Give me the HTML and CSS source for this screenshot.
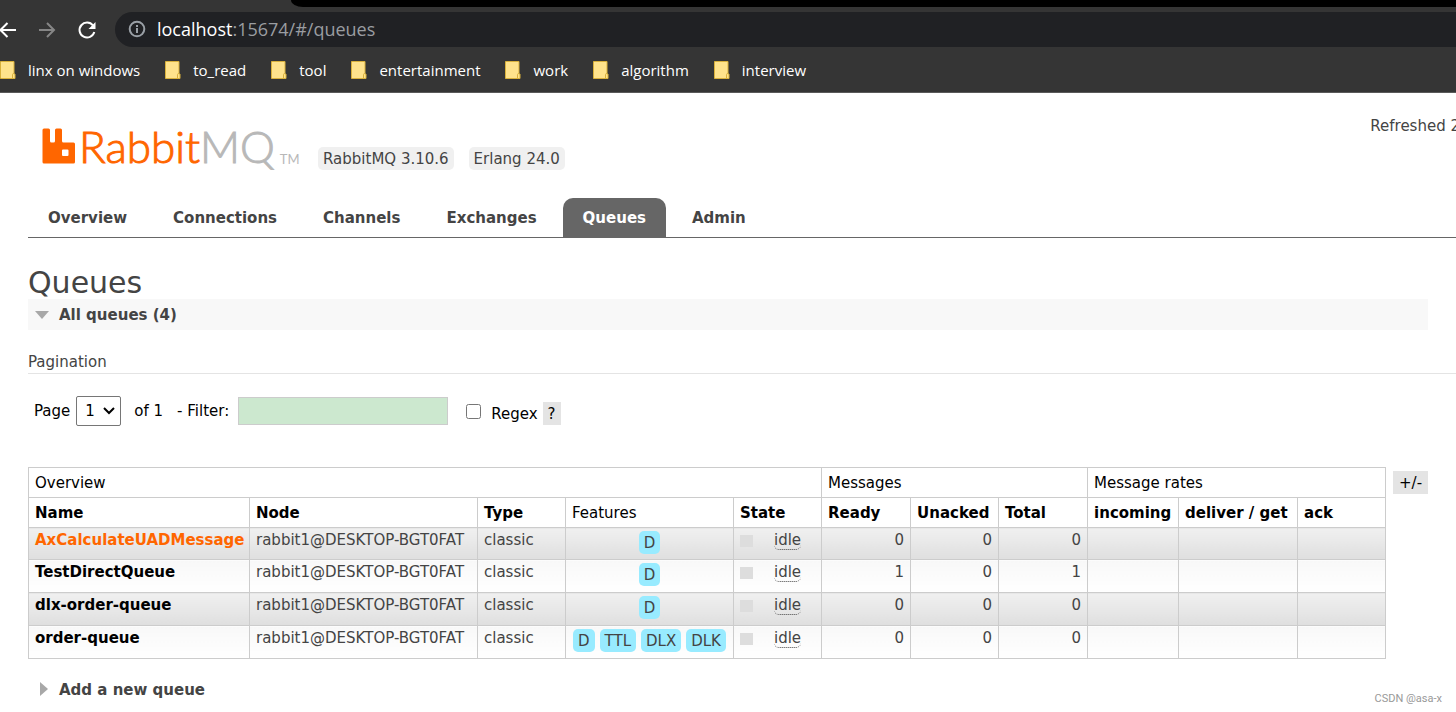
FILE: index.html
```html
<!DOCTYPE html>
<html lang="en">
<head>
<meta charset="utf-8">
<title>RabbitMQ Management</title>
<link rel="stylesheet" href="styles.css">
</head>
<body>
<header class="browser">
  <div class="tabstrip"></div>
  <div class="toolbar">
    <button class="nav" aria-label="Back"><svg width="20" height="20" viewBox="0 0 20 20"><path d="M19 10H3M10.500 3L3.500 10l7 7" /></svg></button>
    <button class="nav nav-off" aria-label="Forward"><svg width="20" height="20" viewBox="0 0 20 20"><path d="M2 10h15M10 3l7 7-7 7" /></svg></button>
    <button class="nav" aria-label="Reload"><svg width="20" height="20" viewBox="0 0 20 20"><path d="M16 5.500A7.500 7.500 0 1 0 17.300 12" /><path class="solid" d="M18.500 2v7h-7z" /></svg></button>
    <div class="address">
      <svg class="info" width="18" height="18" viewBox="0 0 18 18"><circle cx="9" cy="9" r="7.300" /><path d="M9 8v5M9 5v2" /></svg>
      <span><span class="host">localhost</span>:15674/#/queues</span>
    </div>
  </div>
  <nav class="bookmarks" aria-label="Bookmarks">
    <a href="#"><svg class="folder" width="16" height="20" viewBox="0 0 16 20"><path d="M.5 1.500h13.500V14h1v4.500H.5z" /><path d="M12.500 18v-3.500q0-1 1.500-1" /></svg>linx on windows</a>
    <a href="#"><svg class="folder" width="16" height="20" viewBox="0 0 16 20"><path d="M.5 1.500h13.500V14h1v4.500H.5z" /><path d="M12.500 18v-3.500q0-1 1.500-1" /></svg>to_read</a>
    <a href="#"><svg class="folder" width="16" height="20" viewBox="0 0 16 20"><path d="M.5 1.500h13.500V14h1v4.500H.5z" /><path d="M12.500 18v-3.500q0-1 1.500-1" /></svg>tool</a>
    <a href="#"><svg class="folder" width="16" height="20" viewBox="0 0 16 20"><path d="M.5 1.500h13.500V14h1v4.500H.5z" /><path d="M12.500 18v-3.500q0-1 1.500-1" /></svg>entertainment</a>
    <a href="#"><svg class="folder" width="16" height="20" viewBox="0 0 16 20"><path d="M.5 1.500h13.500V14h1v4.500H.5z" /><path d="M12.500 18v-3.500q0-1 1.500-1" /></svg>work</a>
    <a href="#"><svg class="folder" width="16" height="20" viewBox="0 0 16 20"><path d="M.5 1.500h13.500V14h1v4.500H.5z" /><path d="M12.500 18v-3.500q0-1 1.500-1" /></svg>algorithm</a>
    <a href="#"><svg class="folder" width="16" height="20" viewBox="0 0 16 20"><path d="M.5 1.500h13.500V14h1v4.500H.5z" /><path d="M12.500 18v-3.500q0-1 1.500-1" /></svg>interview</a>
  </nav>
</header>

<div class="masthead">
  <a class="logo" href="#" aria-label="RabbitMQ">
    <svg width="34" height="36" viewBox="0 0 34 36"><path d="M2 .5h4.500q1.500 0 1.500 1.500v11q0 1.500 1.500 1.500h2q1.500 0 1.500-1.500V2q0-1.500 1.500-1.500h4q1.500 0 1.500 1.500v11q0 1.500 1.500 1.500h10q1.500 0 1.500 1.500V34q0 1.500-1.500 1.500H2Q.5 35.500.5 34V2Q.5.500 2 .500zM21 21.500q-1 0-1 1v4.500q0 1 1 1h4.500q1 0 1-1v-4.500q0-1-1-1z" /></svg>
    <span class="word">Rabbit<span class="mq">MQ</span></span><span class="tm">TM</span>
  </a>
  <ul class="versions"><li>RabbitMQ 3.10.6</li><li>Erlang 24.0</li></ul>
  <div class="refreshed">Refreshed 2</div>
</div>

<nav class="tabs" aria-label="Sections">
  <a href="#">Overview</a><a href="#">Connections</a><a href="#">Channels</a><a href="#">Exchanges</a><a class="selected" href="#">Queues</a><a href="#">Admin</a>
</nav>

<main class="main">
  <h1>Queues</h1>
  <h2 class="section open"><svg width="16" height="16" viewBox="0 0 16 16"><path d="M1 4h14l-7 8z" /></svg>All queues (4)</h2>
  <h3>Pagination</h3>
  <form class="filters">
    <label for="page">Page</label>
    <span class="select"><select id="page"><option>1</option></select><svg width="12" height="8" viewBox="0 0 12 8"><path d="M1 1l5 5 5-5" /></svg></span>
    <span class="of">of 1</span>
    <label class="filter-label" for="filter">- Filter:</label>
    <input class="filter" id="filter" type="text">
    <input class="check" id="regex" type="checkbox">
    <label class="regex" for="regex">Regex</label>
    <button class="help" type="button">?</button>
  </form>

  <div class="listing">
    <table>
      <colgroup><col class="c-name"><col class="c-node"><col class="c-std"><col class="c-features"><col class="c-std"><col class="c-num"><col class="c-std"><col class="c-num"><col class="c-in"><col class="c-deliver"><col class="c-std"></colgroup>
      <thead>
        <tr><th class="plain" colspan="5">Overview</th><th class="plain" colspan="3">Messages</th><th class="plain" colspan="3">Message rates</th></tr>
        <tr><th>Name</th><th>Node</th><th>Type</th><th class="plain">Features</th><th>State</th><th>Ready</th><th>Unacked</th><th>Total</th><th>incoming</th><th>deliver / get</th><th>ack</th></tr>
      </thead>
      <tbody>
        <tr><td><a class="hover" href="#">AxCalculateUADMessage</a></td><td>rabbit1@DESKTOP-BGT0FAT</td><td>classic</td><td class="features"><span class="tags"><b>D</b></span></td><td><span class="state"><i></i><abbr>idle</abbr></span></td><td class="r">0</td><td class="r">0</td><td class="r">0</td><td></td><td></td><td></td></tr>
        <tr><td><a href="#">TestDirectQueue</a></td><td>rabbit1@DESKTOP-BGT0FAT</td><td>classic</td><td class="features"><span class="tags"><b>D</b></span></td><td><span class="state"><i></i><abbr>idle</abbr></span></td><td class="r">1</td><td class="r">0</td><td class="r">1</td><td></td><td></td><td></td></tr>
        <tr><td><a href="#">dlx-order-queue</a></td><td>rabbit1@DESKTOP-BGT0FAT</td><td>classic</td><td class="features"><span class="tags"><b>D</b></span></td><td><span class="state"><i></i><abbr>idle</abbr></span></td><td class="r">0</td><td class="r">0</td><td class="r">0</td><td></td><td></td><td></td></tr>
        <tr><td><a href="#">order-queue</a></td><td>rabbit1@DESKTOP-BGT0FAT</td><td>classic</td><td class="features"><span class="tags"><b>D</b><b>TTL</b><b>DLX</b><b>DLK</b></span></td><td><span class="state"><i></i><abbr>idle</abbr></span></td><td class="r">0</td><td class="r">0</td><td class="r">0</td><td></td><td></td><td></td></tr>
      </tbody>
    </table>
    <button class="help columns" type="button">+/-</button>
  </div>

  <h2 class="section"><svg width="16" height="16" viewBox="0 0 16 16"><path d="M6 0v14l8-7z" /></svg>Add a new queue</h2>
</main>
<div class="watermark">CSDN @asa-x</div>
</body>
</html>
```

FILE: styles.css
```css
* { box-sizing: border-box; }
body {
  margin: 0;
  background: #fff;
  color: #444;
  font: 15px/18px Verdana, "DejaVu Sans", sans-serif;
  overflow: hidden;
}
a { color: inherit; text-decoration: none; }
button { border: 0; padding: 0; background: none; font: inherit; color: inherit; }

.browser {
  background: #353535;
  border-bottom: 1px solid #5a5a5a;
  color: #fff;
  font-family: "Segoe UI", "Open Sans", sans-serif;
}
.tabstrip { height: 7px; margin-left: 291px; background: #000; border-bottom-left-radius: 12px 7px; }
.toolbar { display: flex; align-items: center; padding-top: 5px; }
.nav { display: flex; width: 20px; margin-right: 20px; }
.nav:first-child { margin-left: -3px; }
.nav svg { fill: none; stroke: #fff; stroke-width: 2; }
.nav .solid { fill: #fff; stroke: none; }
.nav-off svg { stroke: #868686; }
.address {
  flex: 1;
  display: flex;
  align-items: center;
  gap: 11px;
  height: 35px;
  margin-left: -2px;
  padding: 0 0 1px 13px;
  border-radius: 18px 0 0 18px;
  background: #202124;
  color: #9a9da1;
  font-size: 18px;
}
.host { color: #fff; }
.info { fill: none; stroke: #9aa0a6; stroke-width: 2; }
.bookmarks { display: flex; gap: 25px; height: 45px; align-items: center; font-size: 15px; }
.bookmarks a { display: flex; align-items: center; gap: 12px; white-space: nowrap; }
.folder { fill: #ffe38c; stroke: #d9b13c; }

.masthead { display: flex; align-items: flex-start; height: 105px; padding: 24px 0 0 42px; }
.logo { display: flex; align-items: flex-start; width: 276px; padding-top: 11px; color: #f60; }
.logo svg { flex: none; fill: #f60; }
.word { margin: -1px 0 0 3px; font: 300 44px/38px Lato, sans-serif; -webkit-text-stroke: 1px currentColor; }
.mq { color: #b8b8b8; }
.tm { margin: 22px 0 0 5px; color: #b8b8b8; font: 13px/18px Lato, sans-serif; }
.versions { display: flex; gap: 15px; margin: 30px 0 0; padding: 0; list-style: none; }
.versions li { padding: 3px 5px 2px; border-radius: 5px; background: #f0f0f0; }
.refreshed { margin-left: auto; margin-right: -4px; white-space: nowrap; }

.tabs { display: flex; gap: 6px; margin-left: 28px; border-bottom: 1px solid #666; font-weight: bold; }
.tabs a { padding: 11px 20px 10px; border-radius: 10px 10px 0 0; }
.tabs .selected { background: #666; color: #fff; }

.main { padding-left: 28px; }
h1 { margin: 28px 0 0; font-size: 30px; line-height: 33px; font-weight: normal; }
h2, h3 { margin: 0; font-size: 15px; }
.section { display: flex; align-items: center; gap: 9px; padding: 7px 6px 6px; }
.section svg { fill: #a8a8a8; }
.open { margin-right: 28px; background: #f8f8f8; }
h3 { margin-top: 23px; padding-bottom: 2px; border-bottom: 1px solid #e4e4e4; font-weight: normal; }
.filters { display: flex; align-items: center; height: 30px; margin: 22px 0 41px 6px; color: #000; }
.select { display: flex; align-items: center; margin-left: 6px; }
.select select {
  appearance: none;
  width: 45px;
  height: 30px;
  padding: 0 8px;
  border: 1px solid #767676;
  border-radius: 2px;
  background: #fff;
  color: #000;
  font: inherit;
}
.select svg { margin-left: -18px; margin-right: 6px; fill: none; stroke: #000; stroke-width: 2; pointer-events: none; }
.of { margin-left: 13px; }
.filter-label { margin-left: 14px; }
.filter { width: 210px; height: 28px; margin-left: 9px; border: 1px solid #ccc; background: #cce8cf; font: inherit; }
.check { width: 15px; height: 15px; margin: 0 10px 0 18px; }
.regex { padding-top: 6px; }
.help { height: 23px; padding: 0 5px; background: #e4e4e4; color: #000; }
.filters .help { margin: 5px 0 0 5px; }

.listing { display: flex; align-items: flex-start; gap: 7px; padding-right: 28px; margin-bottom: 15px; }
table { flex: 1; width: 100%; table-layout: fixed; border-collapse: collapse; white-space: nowrap; }
.c-name { width: 221px; }
.c-node { width: 228px; }
.c-std { width: 88px; }
.c-num { width: 89px; }
.c-features { width: 168px; }
.c-in { width: 91px; }
.c-deliver { width: 119px; }
th, td { border: 1px solid #ccc; padding: 0 6px; text-align: left; }
th { height: 30px; color: #000; }
.plain { font-weight: normal; }
td { height: 33px; padding-top: 3px; vertical-align: top; }
tbody tr:first-child td { height: 32px; }
tbody tr:nth-child(odd) td { background: linear-gradient(#f0f0f0, #dfdfdf); }
tbody tr:nth-child(even) td { background: linear-gradient(#f8f8f8, #fff); }
td a { color: #000; font-weight: bold; }
td .hover { color: #f60; }
td.r { text-align: right; }
.tags { display: flex; justify-content: center; gap: 5px; }
.tags b { padding: 3px 5px 2px; border-radius: 5px; background: #98ebff; font-weight: normal; }
.state { display: flex; align-items: center; gap: 21px; }
.state i { width: 13px; height: 12px; background: #ddd; }
.state abbr { border-bottom: 1px dotted #444; border-radius: 5px; }
.columns { margin-top: 4px; width: 35px; }

.watermark {
  position: absolute;
  right: 14px;
  bottom: 5px;
  color: #999;
  font: 11px/16px Roboto, Arial, sans-serif;
}
```
